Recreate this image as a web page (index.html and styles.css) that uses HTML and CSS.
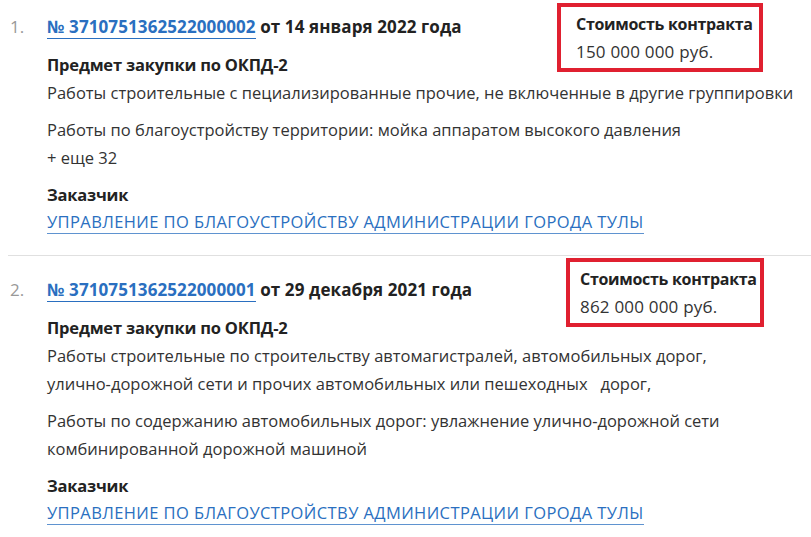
FILE: index.html
```html
<!DOCTYPE html>
<html lang="ru">
<head>
<meta charset="utf-8">
<link rel="stylesheet" href="styles.css">
</head>
<body>
<ol class="list">
  <li class="item item-first">
    <span class="num">1.</span>
    <div class="body">
      <div class="title"><a class="reg" href="#">№ 3710751362522000002</a> от 14 января 2022 года</div>
      <div class="block">
        <div class="label">Предмет закупки по ОКПД-2</div>
        <div class="text">Работы строительные с пециализированные прочие, не включенные в другие группировки</div>
      </div>
      <div class="block">
        <div class="text">Работы по благоустройству территории: мойка аппаратом высокого давления</div>
        <div class="text">+ еще 32</div>
      </div>
      <div class="block">
        <div class="label">Заказчик</div>
        <a class="cust" href="#">УПРАВЛЕНИЕ ПО БЛАГОУСТРОЙСТВУ АДМИНИСТРАЦИИ ГОРОДА ТУЛЫ</a>
      </div>
    </div>
    <div class="price price-a">
      <div class="price-label">Стоимость контракта</div>
      <div class="price-value">150 000 000 руб.</div>
    </div>
  </li>
  <li class="item">
    <span class="num">2.</span>
    <div class="body">
      <div class="title"><a class="reg" href="#">№ 3710751362522000001</a> от 29 декабря 2021 года</div>
      <div class="block">
        <div class="label">Предмет закупки по ОКПД-2</div>
        <div class="text">Работы строительные по строительству автомагистралей, автомобильных дорог, улично‑дорожной сети и прочих автомобильных или пешеходных &nbsp; дорог,</div>
      </div>
      <div class="block">
        <div class="text">Работы по содержанию автомобильных дорог: увлажнение улично‑дорожной сети комбинированной дорожной машиной</div>
      </div>
      <div class="block">
        <div class="label">Заказчик</div>
        <a class="cust" href="#">УПРАВЛЕНИЕ ПО БЛАГОУСТРОЙСТВУ АДМИНИСТРАЦИИ ГОРОДА ТУЛЫ</a>
      </div>
    </div>
    <div class="price price-b">
      <div class="price-label">Стоимость контракта</div>
      <div class="price-value">862 000 000 руб.</div>
    </div>
  </li>
</ol>
</body>
</html>
```
FILE: styles.css
```css
html, body {
  margin: 0;
  padding: 0;
  background: #fff;
}
body {
  font-family: "Open Sans", "Noto Sans", sans-serif;
  font-size: 16.5px;
  color: #333;
}
.list {
  list-style: none;
  margin: 0;
  padding: 0 0 0 8px;
}
.item {
  position: relative;
  display: flex;
  padding: 20px 0 20px 0;
  border-bottom: 1px solid #e0e0e0;
}
.item-first {
  padding-top: 13px;
}
.item:last-child {
  border-bottom: none;
}
.num {
  width: 39px;
  padding-left: 2px;
  box-sizing: border-box;
  flex: none;
  color: #999;
  font-size: 17px;
  line-height: 28px;
}
.body {
  flex: 1;
  max-width: 760px;
  display: flex;
  flex-direction: column;
  gap: 9px;
}
.title {
  font-size: 17px;
  font-weight: 700;
  line-height: 28px;
  color: #222;
  margin-bottom: 1px;
  letter-spacing: 0.1px;
}
.reg {
  color: #2a6fc0;
  text-decoration: none;
  border-bottom: 1px solid #2a6fc0;
}
.label {
  font-weight: 700;
  color: #222;
  line-height: 28px;
  letter-spacing: -0.2px;
}
.text {
  line-height: 28px;
  color: #333;
}
.cust {
  align-self: flex-start;
  color: #2a6fc0;
  text-decoration: none;
  border-bottom: 1px solid #5f93d0;
  line-height: 26px;
  letter-spacing: 0.4px;
}
.price {
  position: absolute;
  border: 4px solid #e02030;
  line-height: 27px;
  color: #333;
  white-space: nowrap;
}
.price-a {
  top: 3px;
  left: 549px;
  padding: 4px 6px 3px 15px;
}
.price-b {
  top: 2px;
  left: 558px;
  padding: 4px 3px 3px 10px;
}
.price-label {
  font-size: 16px;
  font-weight: 700;
  color: #222;
  letter-spacing: -0.3px;
}
.price-value {
  font-size: 17px;
  letter-spacing: 0.2px;
}
```
